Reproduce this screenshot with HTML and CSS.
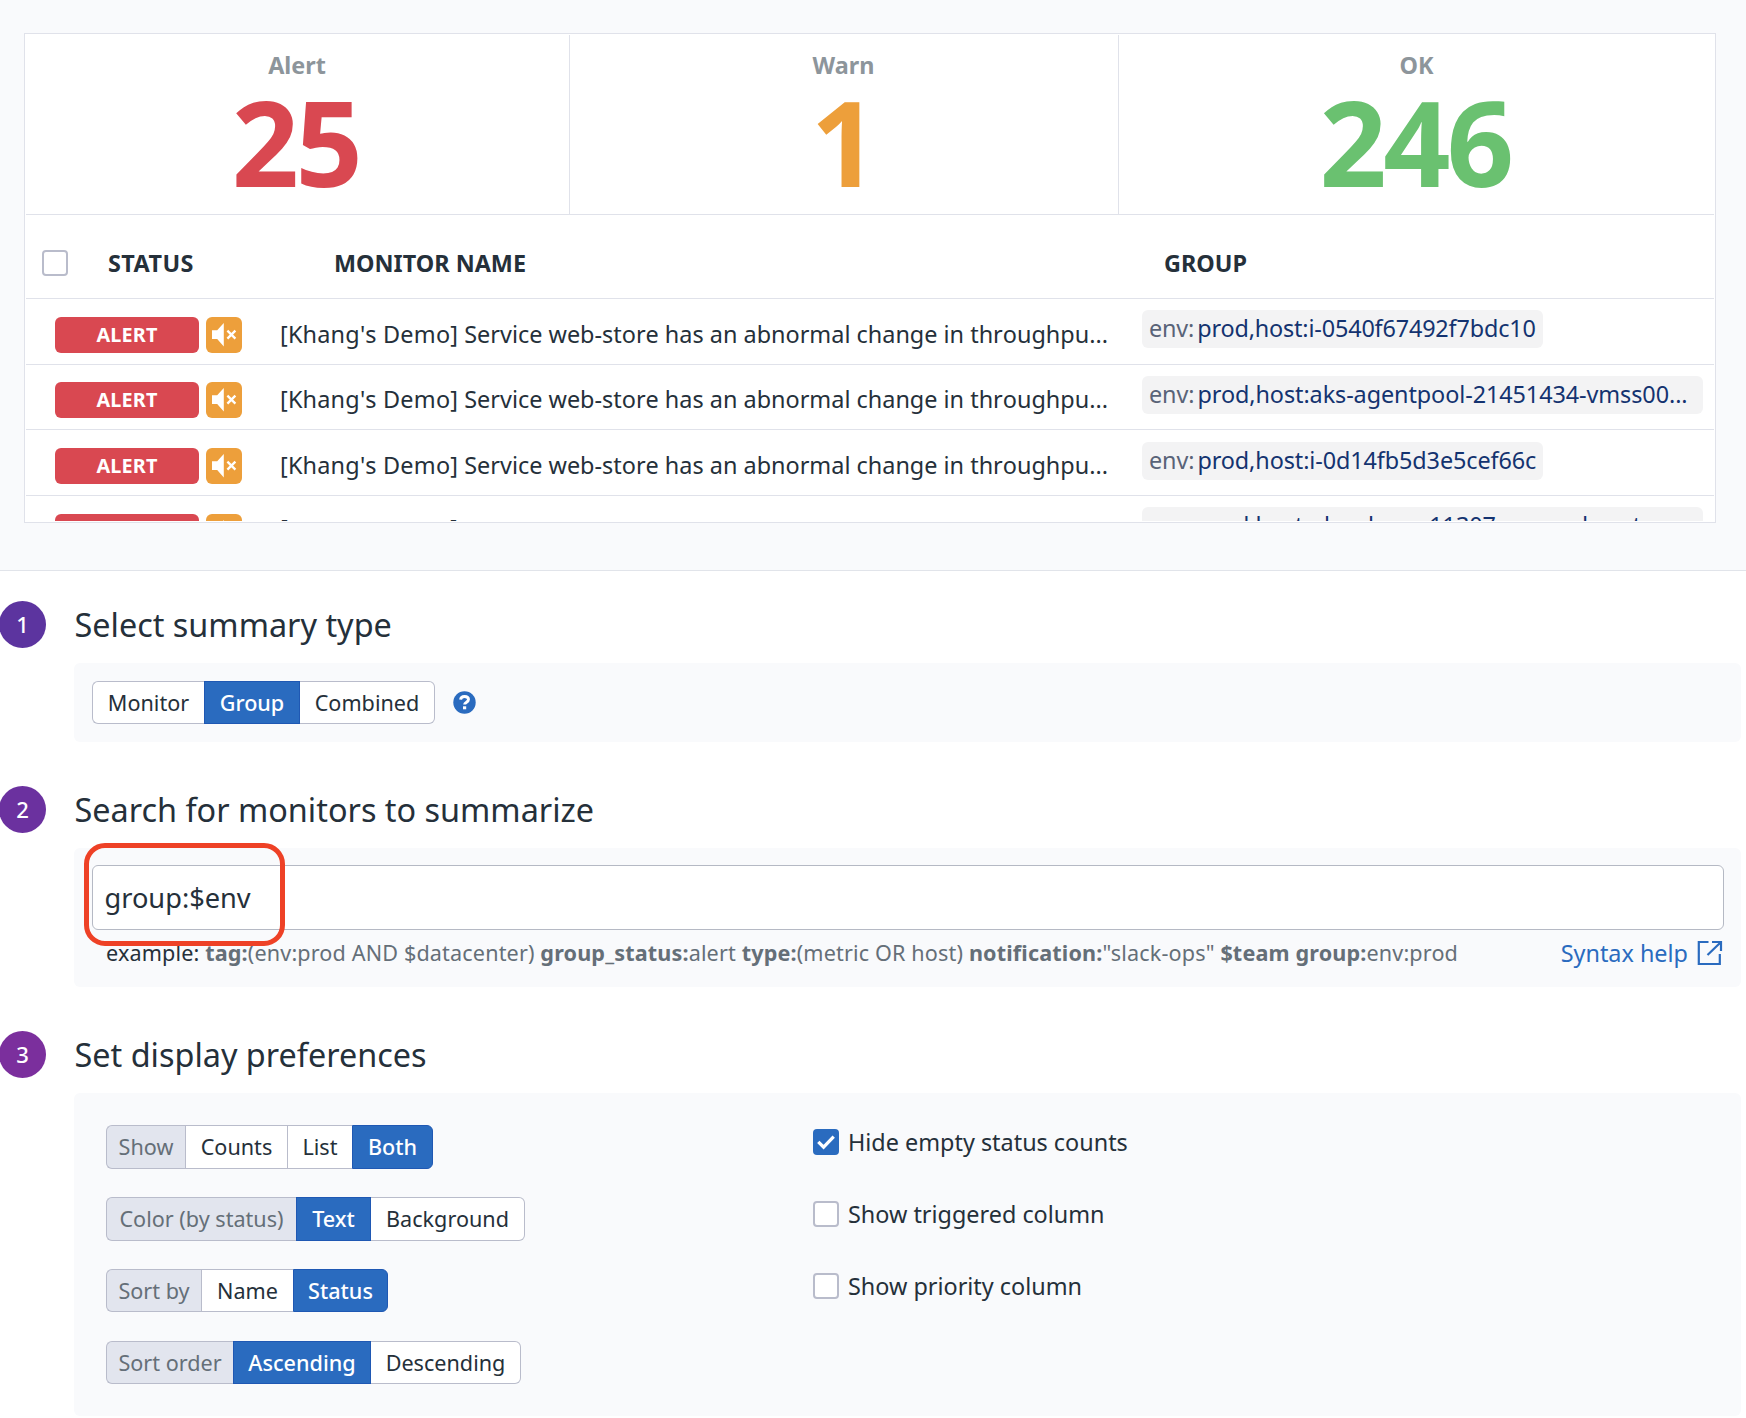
FILE: index.html
```html
<!DOCTYPE html>
<html lang="en">
<head>
<meta charset="utf-8">
<title>Monitor Summary</title>
<link rel="stylesheet" href="styles.css">
</head>
<body>
<svg class="sprite" aria-hidden="true">
  <symbol id="mute" viewBox="0 0 36 36">
    <path d="M6 13.200h5.200L17.800 6v23.600l-6.600-7.600H6z" fill="#fff"/>
    <path d="M21.400 13.600l8 8M29.400 13.600l-8 8" stroke="#fff" stroke-width="2.300" fill="none"/>
  </symbol>
</svg>

<section class="preview">
  <div class="widget">
    <div class="widget-body">
    <div class="counts">
      <div class="count"><span class="count-label">Alert</span><span class="count-value red">25</span></div>
      <div class="count"><span class="count-label">Warn</span><span class="count-value orange">1</span></div>
      <div class="count"><span class="count-label">OK</span><span class="count-value green">246</span></div>
    </div>
    <div class="thead">
      <span class="box"></span>
      <span class="th th-status">STATUS</span>
      <span class="th th-name">MONITOR NAME</span>
      <span class="th">GROUP</span>
    </div>
    <div class="row">
      <span class="badge">ALERT</span><svg class="muted"><use href="#mute"/></svg>
      <span class="name"><span class="prefix">[Khang's Demo]</span> Service web-store has an abnormal change in throughpu...</span>
      <span class="tag tight"><span class="key">env:</span>prod,host:i-0540f67492f7bdc10</span>
    </div>
    <div class="row short">
      <span class="badge">ALERT</span><svg class="muted"><use href="#mute"/></svg>
      <span class="name"><span class="prefix">[Khang's Demo]</span> Service web-store has an abnormal change in throughpu...</span>
      <span class="tag wide"><span class="key">env:</span>prod,host:aks-agentpool-21451434-vmss00...</span>
    </div>
    <div class="row">
      <span class="badge">ALERT</span><svg class="muted"><use href="#mute"/></svg>
      <span class="name"><span class="prefix">[Khang's Demo]</span> Service web-store has an abnormal change in throughpu...</span>
      <span class="tag lower"><span class="key">env:</span>prod,host:i-0d14fb5d3e5cef66c</span>
    </div>
    <div class="row">
      <span class="badge">ALERT</span><svg class="muted"><use href="#mute"/></svg>
      <span class="name clipped"><span class="prefix"><span class="bracket">[</span>Khang's Demo<span class="bracket">]</span></span> Service web-store has an abnormal change in throughpu...</span>
      <span class="tag wide"><span class="key">env:</span>prod,host:gke-shops-11307-gc-prod-east...</span>
    </div>
    </div>
  </div>
</section>

<section class="step step-1">
  <header class="step-head"><span class="num">1</span><h2>Select summary type</h2></header>
  <div class="panel panel-type">
    <div class="group"><button class="w112">Monitor</button><button class="on w96">Group</button><button class="w135">Combined</button></div>
    <svg class="help" viewBox="0 0 23 23"><circle cx="11.500" cy="11.500" r="11.200" fill="#2a6bbf"/><path d="M7.600 8.700C7.800 6.500 9.300 5.500 11.500 5.500c2.300 0 4 1.200 4 3.100 0 2.600-3.900 2.500-3.900 5" fill="none" stroke="#fff" stroke-width="2.900"/><rect x="10" y="15.300" width="3.200" height="3" fill="#fff"/></svg>
  </div>
</section>

<section class="step step-2">
  <header class="step-head"><span class="num">2</span><h2>Search for monitors to summarize</h2></header>
  <div class="panel panel-search">
    <div class="search">group:$env</div>
    <div class="hint">
      <p><span class="dark">example:</span> <b>tag:</b>(env:prod AND $datacenter) <b>group_status:</b>alert <b>type:</b>(metric OR host) <b>notification:</b>"slack-ops" <b>$team</b> <b>group:</b>env:prod</p>
      <a class="syntax">Syntax help<svg viewBox="0 0 26 26"><path d="M11.500 2H1.800V24H22.800V14M15 2H24V11M24 2L10.500 15" fill="none" stroke="#2a6bbf" stroke-width="2.200"/></svg></a>
    </div>
    <div class="callout"></div>
  </div>
</section>

<section class="step step-3">
  <header class="step-head"><span class="num">3</span><h2>Set display preferences</h2></header>
  <div class="panel panel-prefs">
    <div class="col-left">
      <div class="group"><span class="lead w79">Show</span><button class="w102">Counts</button><button class="w65">List</button><button class="on w81">Both</button></div>
      <div class="group"><span class="lead w190">Color (by status)</span><button class="on w75">Text</button><button class="w154">Background</button></div>
      <div class="group low"><span class="lead w95">Sort by</span><button class="w92">Name</button><button class="on w95">Status</button></div>
      <div class="group low"><span class="lead w127">Sort order</span><button class="on w138">Ascending</button><button class="w150">Descending</button></div>
    </div>
    <div class="col-right">
      <label class="check"><span class="box checked"><svg viewBox="0 0 27 27"><path d="M5.500 13.300L11 18.800L21.500 8" fill="none" stroke="#fff" stroke-width="3.400"/></svg></span>Hide empty status counts</label>
      <label class="check"><span class="box"></span>Show triggered column</label>
      <label class="check"><span class="box"></span>Show priority column</label>
    </div>
  </div>
</section>
</body>
</html>
```

FILE: styles.css
```css
* { box-sizing: border-box; }
body {
  margin: 0;
  width: 1746px;
  height: 1418px;
  overflow: hidden;
  background: #fff;
  color: #25303a;
  font-family: "Noto Sans", sans-serif;
  font-size: 23.4px;
}
.sprite { display: none; }

/* Widget preview */
.preview {
  height: 571px;
  padding: 33px 30px 0 24px;
  background: #f9fafc;
  border-bottom: 1px solid #e1e4ea;
}
.widget {
  height: 490px;
  padding: 1px;
  background: #fff;
  border: 1px solid #e0e2ea;
}
.widget-body { height: 486px; overflow: hidden; }
.counts {
  display: grid;
  grid-template-columns: 543px 549px 1fr;
  height: 180px;
  border-bottom: 1px solid #e0e2ea;
}
.count {
  display: flex;
  flex-direction: column;
  align-items: center;
  padding-top: 14px;
  font-weight: 700;
}
.count + .count { border-left: 1px solid #e0e2ea; }
.count-label { padding-right: 1px; color: #8d959b; line-height: 32px; }
.count:last-child .count-label { padding-right: 0; }
.count-value {
  padding-right: 3px;
  font-size: 117.600px;
  line-height: 121px;
  letter-spacing: -3.600px;
}
.red { color: #d94851; padding-right: 4px; }
.orange { color: #ed9f3b; }
.green { color: #6ac170; padding-right: 3px; }

.thead {
  display: flex;
  align-items: center;
  height: 84px;
  padding: 12px 0 0 16px;
  border-bottom: 1px solid #e0e2ea;
}
.th { font-weight: 700; line-height: 32px; }
.th-status { width: 226px; margin-left: 40px; letter-spacing: 0.400px; }
.th-name { width: 830px; }
.thead .box { margin-top: 1px; }

.row {
  display: flex;
  height: 66px;
  padding-left: 29px;
  border-bottom: 1px solid #e0e2ea;
}
.row.short { height: 65px; }
.badge {
  width: 144px;
  height: 36px;
  margin-top: 18px;
  border-radius: 6px;
  background: #d94851;
  color: #fff;
  font-size: 19.800px;
  font-weight: 700;
  letter-spacing: 0.150px;
  line-height: 35px;
  text-align: center;
}
.muted {
  width: 36px;
  height: 36px;
  margin: 18px 0 0 7px;
  border-radius: 6px;
  background: #ed9f3b;
}
.name {
  width: 862px;
  margin: 19px 0 0 38px;
  font-size: 23.430px;
  font-kerning: none;
  line-height: 32px;
  white-space: nowrap;
}
.prefix { letter-spacing: 0.200px; }
.short .badge, .short .muted { margin-top: 17px; }
.short .name { margin-top: 18px; }
.bracket { line-height: 0; vertical-align: 3px; }
.tag {
  width: 401px;
  height: 38px;
  margin-top: 11px;
  padding: 0 0 0 7px;
  border-radius: 6px;
  background: #f3f3f4;
  color: #143370;
  letter-spacing: -0.080px;
  line-height: 37px;
  white-space: nowrap;
}
.tag.tight { letter-spacing: -0.160px; }
.tag.wide { width: 561px; }
.tag.lower { margin-top: 12px; letter-spacing: -0.100px; }
.key { color: #596378; margin-right: 3px; }

/* Steps */
.step-head {
  display: flex;
  align-items: center;
  height: 47px;
  margin-left: -1px;
}
.step-1 { margin-top: 30px; }
.step-2 { margin-top: 44px; }
.step-3 { margin-top: 44px; }
.num {
  width: 47px;
  height: 47px;
  border-radius: 50%;
  color: #fff;
  font-size: 22px;
  font-weight: 500;
  line-height: 46px;
  text-align: center;
}
.step-1 .num { background: #5c349f; }
.step-2 .num { background: #6b319f; }
.step-3 .num { background: #7b2f9d; }
h2 {
  margin: 0 0 0 28.500px;
  font-size: 32.400px;
  font-weight: 400;
  line-height: 47px;
}
.panel {
  width: 1667px;
  margin: 15px 0 0 74px;
  border-radius: 6px;
  background: #f9fafc;
}
.panel-type {
  display: flex;
  align-items: center;
  height: 79px;
  padding-left: 18px;
}
.group { display: flex; height: 44px; }
.panel-type .group { height: 43px; }
.group > * {
  border: 1px solid #b9bccb;
  border-right-width: 0;
  padding: 0;
  background: #fff;
  color: #25303a;
  font: 400 21.600px "Noto Sans", sans-serif;
  line-height: 41px;
  text-align: center;
  white-space: nowrap;
}
.group > :first-child { border-radius: 6px 0 0 6px; }
.group > :last-child { border-right-width: 1px; border-radius: 0 6px 6px 0; }
.group .lead { background: #e2e5ee; color: #656f78; }
.group .on { background: #2a6bbf; border-color: #1f58b3; border-right-width: 1px; color: #fff; font-weight: 500; }
.group .on + * { border-left-width: 0; }
.panel-prefs .group button { padding-bottom: 2px; }
.group.low { height: 43px; }
.panel-prefs .group.low button { padding-bottom: 0; }
.group.low + .group.low { margin-top: 1px; }
.w65 { width: 65px; } .w75 { width: 75px; } .w79 { width: 79px; } .w81 { width: 81px; }
.w92 { width: 92px; } .w95 { width: 95px; } .w96 { width: 96px; } .w102 { width: 102px; }
.w112 { width: 112px; } .w127 { width: 127px; } .w135 { width: 135px; } .w138 { width: 138px; }
.w150 { width: 150px; } .w154 { width: 154px; } .w190 { width: 190px; }
.help { width: 23px; height: 23px; margin-left: 18px; }

.panel-search { position: relative; height: 139px; padding: 17px 17px 0 18px; }
.search {
  height: 65px;
  padding-left: 11.500px;
  border: 1px solid #b5b9c4;
  border-radius: 6px;
  background: #fff;
  font-size: 27.200px;
  line-height: 64px;
}
.hint {
  display: flex;
  justify-content: space-between;
  padding: 7px 1px 0 14px;
  color: #656f78;
  font-size: 21.600px;
  line-height: 32px;
}
.hint p { margin: 0; letter-spacing: 0.145px; white-space: nowrap; }
.dark { color: #25303a; }
.syntax { display: flex; align-items: center; color: #2a6bbf; font-size: 23.400px; }
.syntax svg { width: 26px; height: 26px; margin-left: 9px; }
.callout {
  position: absolute;
  left: 10px;
  top: -5px;
  width: 201px;
  height: 103px;
  border: 5px solid #ee4126;
  border-radius: 21px;
}

.panel-prefs { display: flex; height: 323px; padding: 32px 0 0 32px; }
.col-left { display: flex; flex-direction: column; gap: 28px; width: 707.400px; }
.col-right { display: flex; flex-direction: column; gap: 40px; padding-top: 2px; }
.check { display: flex; align-items: flex-start; gap: 8.600px; height: 32px; line-height: 30px; }
.check .box { margin-top: 2px; }
.box {
  width: 26px;
  height: 26px;
  border: 2px solid #b9bccb;
  border-radius: 4px;
  background: #fff;
}
.box.checked { border: 0; background: #2a6bbf; }
.box svg { display: block; width: 26px; height: 26px; }
```
